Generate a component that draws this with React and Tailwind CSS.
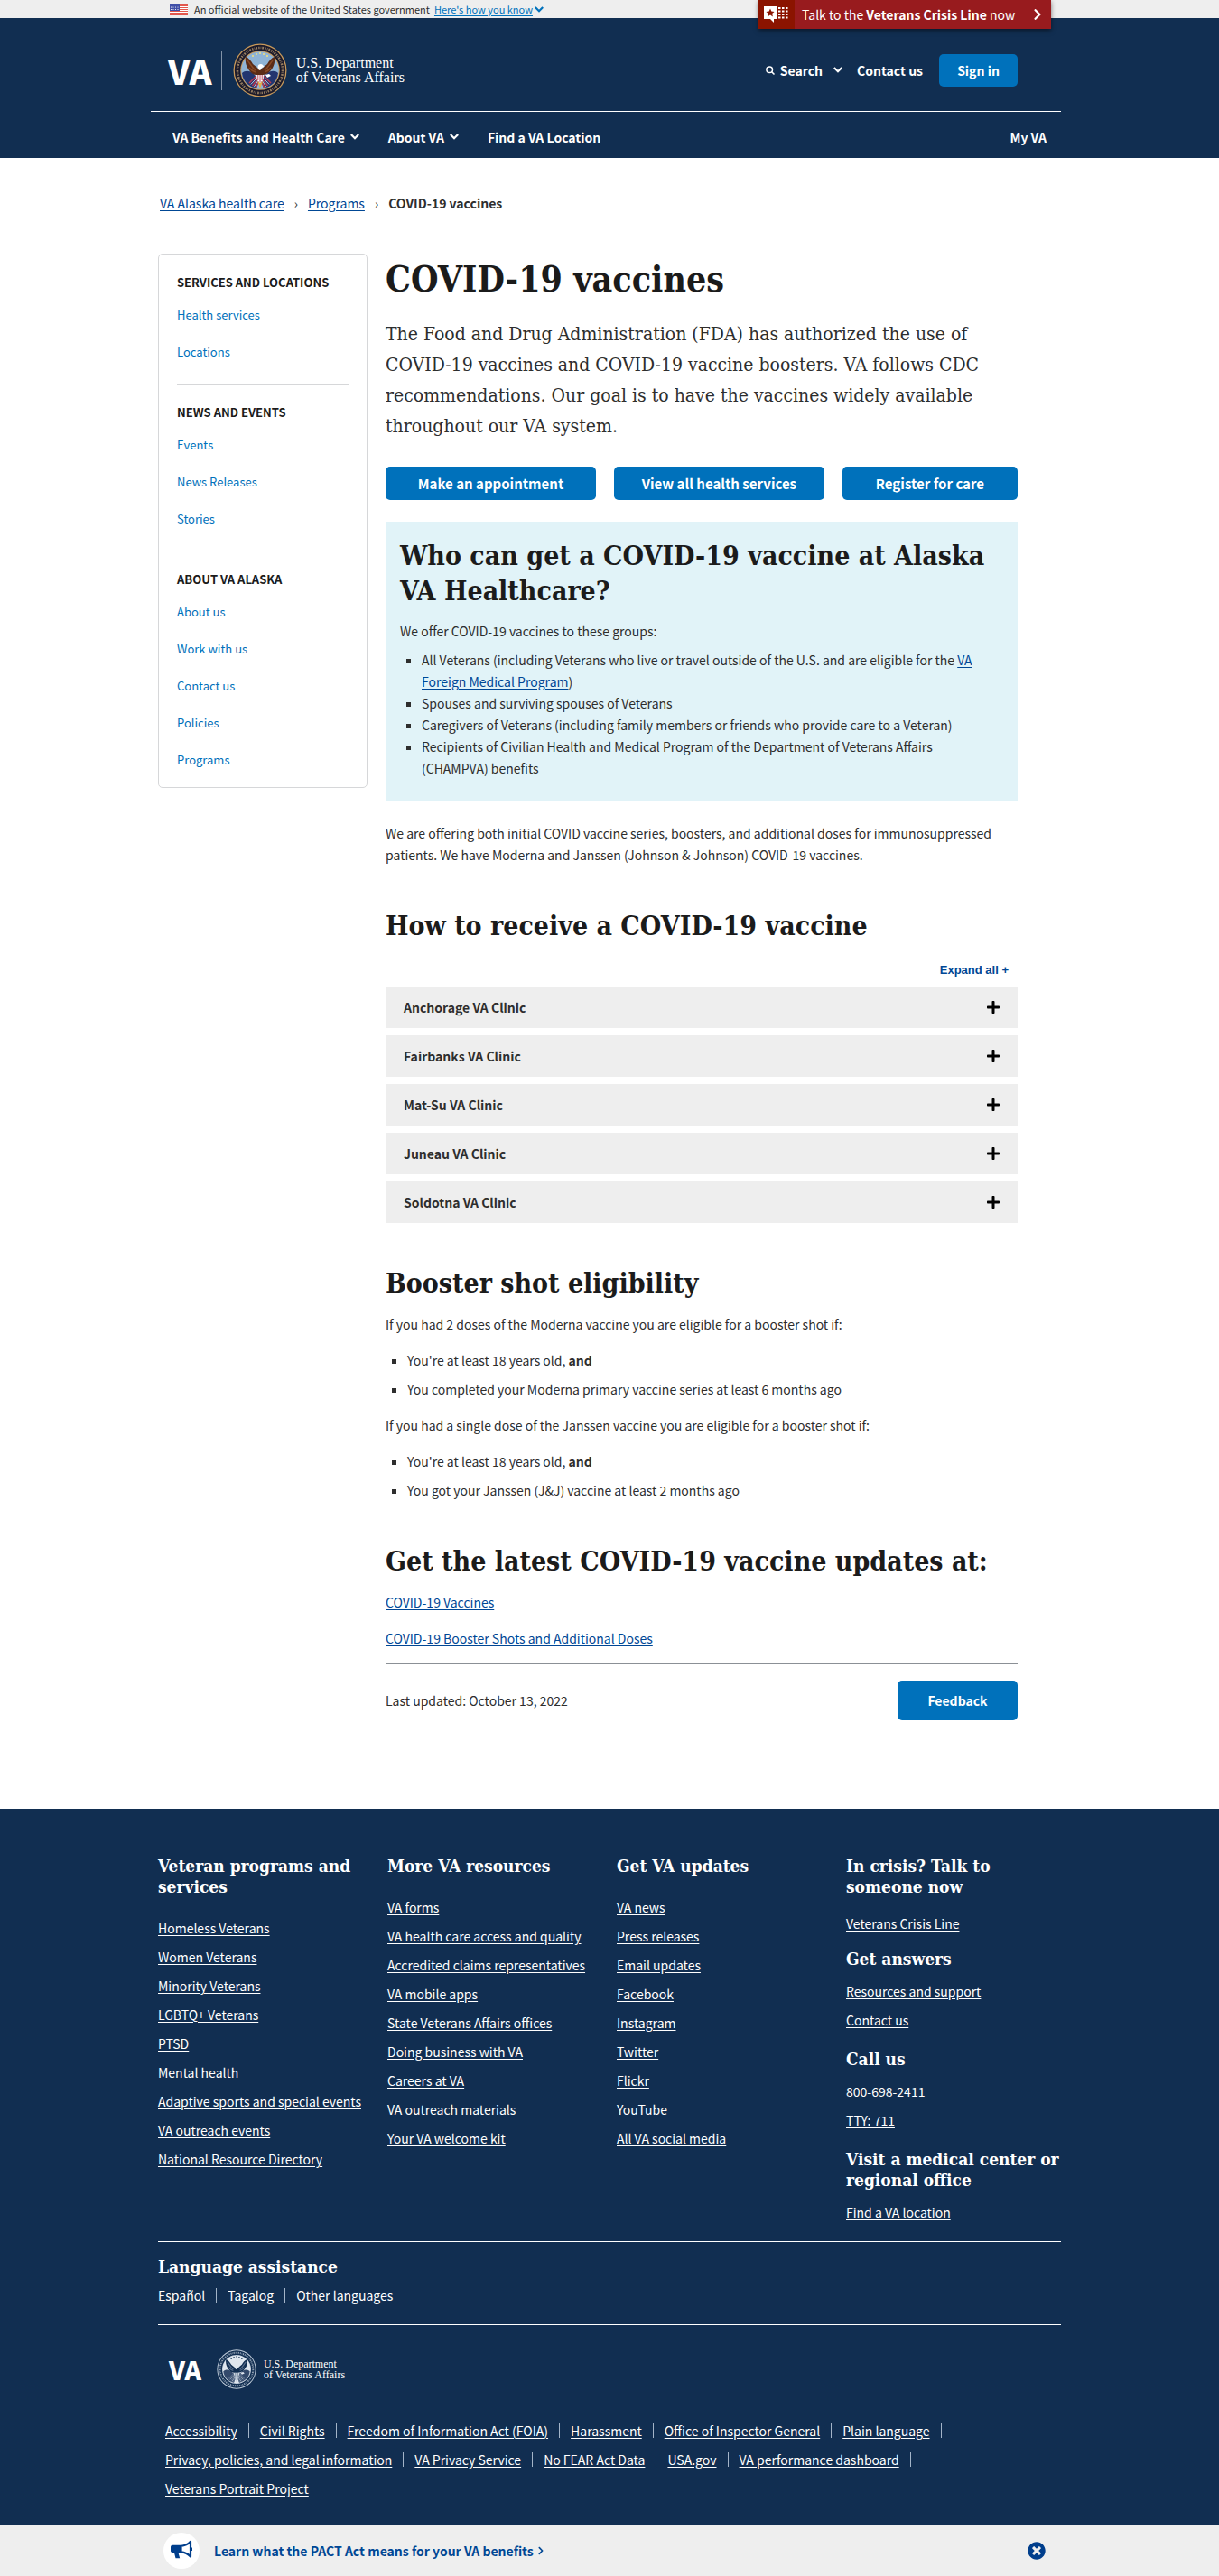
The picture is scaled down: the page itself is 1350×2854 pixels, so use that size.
import React from "react";
import { FaChevronRight, FaPlus, FaTimesCircle } from "react-icons/fa";

const bodyFont = "font-['Noto_Sans_CJK_SC','Noto_Sans',sans-serif]";
const slabFont = "font-['DejaVu_Serif_Condensed','DejaVu_Serif',serif]";

const sideSections = [
  { title: "SERVICES AND LOCATIONS", links: ["Health services", "Locations"] },
  { title: "NEWS AND EVENTS", links: ["Events", "News Releases", "Stories"] },
  { title: "ABOUT VA ALASKA", links: ["About us", "Work with us", "Contact us", "Policies", "Programs"] },
];

const clinics = ["Anchorage", "Fairbanks", "Mat-Su", "Juneau", "Soldotna"];

const footerColumns = [
  {
    title: "Veteran programs and services",
    links: ["Homeless Veterans", "Women Veterans", "Minority Veterans", "LGBTQ+ Veterans", "PTSD", "Mental health", "Adaptive sports and special events", "VA outreach events", "National Resource Directory"],
  },
  {
    title: "More VA resources",
    links: ["VA forms", "VA health care access and quality", "Accredited claims representatives", "VA mobile apps", "State Veterans Affairs offices", "Doing business with VA", "Careers at VA", "VA outreach materials", "Your VA welcome kit"],
  },
  {
    title: "Get VA updates",
    links: ["VA news", "Press releases", "Email updates", "Facebook", "Instagram", "Twitter", "Flickr", "YouTube", "All VA social media"],
  },
];

const contactGroups = [
  { title: "Get answers", links: ["Resources and support", "Contact us"], space: "mt-4" },
  { title: "Call us", links: ["800-698-2411", "TTY: 711"], space: "mt-5" },
  { title: "Visit a medical center or regional office", links: ["Find a VA location"], space: "mt-5" },
];

const legalLinks = ["Accessibility", "Civil Rights", "Freedom of Information Act (FOIA)", "Harassment", "Office of Inspector General", "Plain language", "Privacy, policies, and legal information", "VA Privacy Service", "No FEAR Act Data", "USA.gov", "VA performance dashboard", "Veterans Portrait Project"];

function Flag() {
  return (
    <svg viewBox="0 0 20 13" className="h-[13px] w-5" aria-hidden="true">
      <rect width="20" height="13" fill="#fff" />
      {[0, 2, 4, 6, 8, 10, 12].map((y) => (
        <rect key={y} y={y} width="20" height="1" fill="#e2574c" />
      ))}
      <rect width="11" height="8" fill="#3f4fa8" />
      {[1.5, 4, 6.5].map((y) =>
        [1.5, 4, 6.5, 9].map((x) => <circle key={`${x}-${y}`} cx={x} cy={y} r="0.6" fill="#fff" />)
      )}
    </svg>
  );
}

function Seal({ mono = false, className }) {
  const c = mono
    ? { rope: "#c3cedb", ring: "#112e51", text: "#c3cedb", sky: "#dfe6ee", wing: "#112e51", wing2: "#5a6f8c", star: "#112e51", flag1: "#5a6f8c", flag2: "#33496b", head: "#dfe6ee", gold: "#c3cedb" }
    : { rope: "#c99a5b", ring: "#1b1a2b", text: "#c9a877", sky: "#8fb4d6", wing: "#5b2c17", wing2: "#8a4a25", star: "#f3e27a", flag1: "#b83a50", flag2: "#23356f", head: "#ffffff", gold: "#e0ae4c" };
  return (
    <svg viewBox="0 0 60 60" className={className} aria-hidden="true">
      <circle cx="30" cy="30" r="29.5" fill={c.rope} />
      <circle cx="30" cy="30" r="28.2" fill={c.ring} />
      <circle cx="30" cy="30" r="25" fill="none" stroke={c.text} strokeWidth="2.6" strokeDasharray="1.4 1.1 0.7 1 1.8 1.2" opacity="0.7" />
      <circle cx="30" cy="30" r="21.8" fill={c.rope} />
      <circle cx="30" cy="30" r="20.8" fill={c.sky} />
      {[[22, 14], [26, 12], [30, 11], [34, 12], [38, 14]].map(([x, y]) => (
        <circle key={x} cx={x} cy={y} r="1" fill={c.star} />
      ))}
      <path d="M10 33c3-3 8-3 12 0l7 8-3 9c-9-2-15-8-16-17z" fill={c.flag2} />
      <path d="M50 33c-3-3-8-3-12 0l-7 8 3 9c9-2 15-8 16-17z" fill={c.flag2} />
      <path d="M18 44l8-8M21.500 47l6.500-8M25 49.500l4-8M42 44l-8-8M38.500 47l-6.500-8M35 49.500l-4-8" stroke={c.flag1} strokeWidth="1.500" />
      <path d="M19.800 45.500l7.500-8M23.200 48.300l5-7.500M40.200 45.500l-7.500-8M36.800 48.300l-5-7.500" stroke="#e8ecf2" strokeWidth="0.8" />
      <path d="M14 15c3 1 6 4 8 8l5 4 3 3 3-3 5-4c2-4 5-7 8-8 1 6-1 12-5 16-3 3-6 4-8 4l-3 3-4-3c-3 0-6-2-8-5-3-4-5-9-4-15z" fill={c.wing} />
      <path d="M16 19c3 3 4 7 9 11M18 27c2 3 4 4 7 5M44 19c-3 3-4 7-9 11M42 27c-2 3-4 4-7 5" stroke={c.wing2} strokeWidth="1.400" fill="none" />
      <path d="M27.500 26c0-3 4-4 5.500-2l1.500 2-2.500 1-2 3-2-1z" fill={c.head} />
      <path d="M26 35h8l-1 6-3 3-3-3z" fill={c.head} />
      <path d="M27.800 35v6M30 35v8M32.200 35v6" stroke={c.flag1} strokeWidth="0.900" />
      <path d="M27 42l3 8 3-8-3 2z" fill={c.gold} />
      <path d="M36 35l4-1 2 2-4 2z" fill={c.head} />
    </svg>
  );
}

function Chevron({ className }) {
  return (
    <svg viewBox="0 0 10 7" className={className} fill="none" stroke="currentColor" strokeWidth="2.200" aria-hidden="true">
      <path d="M0.800 1l4.200 4.200L9.200 1" />
    </svg>
  );
}

function CrisisIcon() {
  return (
    <svg viewBox="0 0 28 18" className="h-[18px] w-7" fill="#fff" aria-hidden="true">
      <path d="M0 0h14v14h-3v4l-4-4H0z" />
      <path d="M7 2.500l1.300 3.100 3.300.3-2.500 2.200.8 3.300L7 9.600l-2.900 1.800.8-3.300-2.500-2.200 3.300-.3z" fill="#8b1400" />
      {[1, 4.500, 8, 11.500].map((y) =>
        [16, 20, 24].map((x) => <rect key={`${x}-${y}`} x={x} y={y} width="2.500" height="2" />)
      )}
    </svg>
  );
}

function Megaphone() {
  return (
    <svg viewBox="0 0 24 24" className="h-6 w-6" aria-hidden="true">
      <path d="M0 8c0-1.500 1-2.300 2.500-2.300H11v8.500H8.500l1.700 6H5.500L4 14.200H2.500C1 14.200 0 13.400 0 12z" fill="#003e8c" />
      <path d="M11.500 6.800C16 6.500 19.500 4.500 22 1.800v16.800c-2.500-2.800-6-4.800-10.500-5.200z" fill="#fff" stroke="#003e8c" strokeWidth="2.200" strokeLinejoin="round" />
      <path d="M23 8.500v3.500" stroke="#003e8c" strokeWidth="2" />
    </svg>
  );
}

function FooterLink({ children }) {
  return <a href="#" className="underline underline-offset-2">{children}</a>;
}

function FooterHeading({ children, className = "" }) {
  return <h2 className={`${slabFont} text-[19px] leading-[23px] font-bold ${className}`}>{children}</h2>;
}

function FooterList({ links }) {
  return (
    <ul className="flex flex-col gap-2">
      {links.map((l) => <li key={l}><FooterLink>{l}</FooterLink></li>)}
    </ul>
  );
}

function BarList({ links, className = "" }) {
  return (
    <ul className={`flex flex-wrap gap-y-2 ${className}`}>
      {links.map((l, i) => (
        <li key={l} className="flex items-center">
          <FooterLink>{l}</FooterLink>
          {i < links.length - 1 && <span className="mx-3 h-4 w-px bg-[#a3b4c8]" />}
        </li>
      ))}
    </ul>
  );
}

function H2({ children, className = "" }) {
  return <h2 className={`${slabFont} text-3xl leading-[39px] font-bold text-[#1b1b1b] ${className}`}>{children}</h2>;
}

function BodyLink({ children }) {
  return <a href="#" className="text-[#004795] underline underline-offset-2">{children}</a>;
}

function EligibilityList({ last }) {
  return (
    <ul className="mt-4 flex list-[square] flex-col gap-2 pl-6">
      <li>You're at least 18 years old, <strong>and</strong></li>
      <li>{last}</li>
    </ul>
  );
}

const action = "flex items-center justify-center rounded-[5px] bg-[#0071bb] font-bold text-white";

export default function App() {
  return (
    <div className={`${bodyFont} bg-white text-sm leading-6 text-[#2e2e2e]`}>
      <div className="bg-[#eeeeee]">
        <div className="relative mx-auto max-w-[1000px]">
          <div className="flex h-5 items-center pl-[13px] text-[11px] leading-5">
            <Flag />
            <span className="ml-[7px]">An official website of the United States government</span>
            <button className="ml-[5px] flex items-center gap-0.5 text-[#0071bb]">
              <span className="underline underline-offset-2">Here's how you know</span>
              <Chevron className="h-[7px] w-[10px]" />
            </button>
          </div>
          <a href="#" className="absolute top-0 right-[11px] flex h-8 w-[324px] items-center bg-[#981b1e] leading-8 text-white shadow-[0_2px_5px_rgba(0,0,0,0.5)]">
            <span className="flex h-8 w-10 items-center justify-center bg-[#8b1400]"><CrisisIcon /></span>
            <span className="ml-2">Talk to the <strong>Veterans Crisis Line</strong> now</span>
            <FaChevronRight className="mr-2.5 ml-auto h-[14px] w-[10px]" />
          </a>
        </div>
      </div>

      <header className="bg-[#112e51] font-bold text-white">
        <div className="mx-auto max-w-[1000px]">
          <div className="flex h-[103px] items-center justify-between pt-3 pr-12 pl-[11px]">
            <a href="#" className="flex items-center" aria-label="VA, U.S. Department of Veterans Affairs">
              <span className="text-[38px] leading-10 font-black">VA</span>
              <span className="mr-3 ml-2.5 h-11 w-px bg-[#8293a8]" />
              <Seal className="h-[60px] w-[60px]" />
              <span className="ml-2.5 font-['Liberation_Serif',serif] text-base leading-4 font-normal">
                U.S. Department<br />of Veterans Affairs
              </span>
            </a>
            <div className="flex items-center">
              <button className="flex items-center font-bold">
                <svg viewBox="0 0 10 10" className="mr-1.5 h-2.5 w-2.5" fill="none" stroke="currentColor" strokeWidth="1.500" aria-hidden="true">
                  <circle cx="4.200" cy="4.200" r="3.300" /><path d="M6.600 6.600l2.900 2.900" />
                </svg>
                Search
                <Chevron className="ml-3 h-[7px] w-[10px]" />
              </button>
              <a href="#" className="ml-4">Contact us</a>
              <button className={`${action} ml-[18px] h-9 w-[87px]`}>Sign in</button>
            </div>
          </div>
          <nav className="-ml-2 flex h-[52px] items-center border-t border-white pt-1 pr-4 pl-6">
            <button className="flex items-center gap-1.5 font-bold">VA Benefits and Health Care <Chevron className="h-[7px] w-[10px]" /></button>
            <button className="ml-8 flex items-center gap-1.5 font-bold">About VA <Chevron className="h-[7px] w-[10px]" /></button>
            <a href="#" className="ml-8">Find a VA Location</a>
            <a href="#" className="ml-auto">My VA</a>
          </nav>
        </div>
      </header>

      <div className="mx-auto max-w-[1000px]">
        <nav className="flex items-center gap-[11px] pt-[38px] pb-11 pl-0.5" aria-label="Breadcrumb">
          <BodyLink>VA Alaska health care</BodyLink>
          <span>›</span>
          <BodyLink>Programs</BodyLink>
          <span>›</span>
          <strong>COVID-19 vaccines</strong>
        </nav>

        <div className="grid grid-cols-[232px_minmax(0,700px)] items-start gap-5 pb-[98px]">
          <aside className="rounded-[5px] border border-[#d6d7d9] px-5 pb-[18px] text-[13px]">
            {sideSections.map((s, i) => (
              <section key={s.title} className={i < 2 ? "border-b border-[#d6d7d9] pt-[19px] pb-[23px]" : "pt-[19px]"}>
                <h2 className="font-bold text-[#1b1b1b]">{s.title}</h2>
                <ul className="mt-3 flex flex-col gap-[17px]">
                  {s.links.map((l) => <li key={l}><a href="#" className="text-[#0071bb]">{l}</a></li>)}
                </ul>
              </section>
            ))}
          </aside>

          <main>
            <h1 className={`${slabFont} pt-1 text-[39px] leading-[48px] font-bold text-[#1b1b1b]`}>COVID-19 vaccines</h1>
            <p className={`${slabFont} mt-5 text-[21px] leading-[34px]`}>
              The Food and Drug Administration (FDA) has authorized the use of COVID-19 vaccines and COVID-19 vaccine boosters. VA follows CDC recommendations. Our goal is to have the vaccines widely available throughout our VA system.
            </p>
            <div className="mt-7 grid grid-cols-[6fr_6fr_5fr] gap-5 text-[15px]">
              <a href="#" className={`${action} h-[37px]`}>Make an appointment</a>
              <a href="#" className={`${action} h-[37px]`}>View all health services</a>
              <a href="#" className={`${action} h-[37px]`}>Register for care</a>
            </div>

            <section className="mt-6 bg-[#e1f3f8] px-4 pt-[18px] pb-6">
              <H2>Who can get a COVID-19 vaccine at Alaska VA Healthcare?</H2>
              <p className="mt-[13px]">We offer COVID-19 vaccines to these groups:</p>
              <ul className="mt-2 list-[square] pr-4 pl-6">
                <li>All Veterans (including Veterans who live or travel outside of the U.S. and are eligible for the <BodyLink>VA Foreign Medical Program</BodyLink>)</li>
                <li>Spouses and surviving spouses of Veterans</li>
                <li>Caregivers of Veterans (including family members or friends who provide care to a Veteran)</li>
                <li>Recipients of Civilian Health and Medical Program of the Department of Veterans Affairs (CHAMPVA) benefits</li>
              </ul>
            </section>

            <p className="mt-6">
              We are offering both initial COVID vaccine series, boosters, and additional doses for immunosuppressed patients. We have Moderna and Janssen (Johnson &amp; Johnson) COVID-19 vaccines.
            </p>

            <H2 className="mt-[47px]">How to receive a COVID-19 vaccine</H2>
            <div className="mt-5 flex justify-end pr-2.5">
              <button className="font-['Liberation_Sans',sans-serif] text-[13px] leading-5 font-bold text-[#004795]">Expand all +</button>
            </div>
            <div className="mt-2 flex flex-col gap-2">
              {clinics.map((c) => (
                <button key={c} className="flex h-[46px] items-center justify-between bg-[#eeeeee] pr-[19px] pl-5 font-bold">
                  {c} VA Clinic
                  <FaPlus className="h-4 w-4 text-black" />
                </button>
              ))}
            </div>

            <H2 className="mt-[47px]">Booster shot eligibility</H2>
            <p className="mt-3.5">If you had 2 doses of the Moderna vaccine you are eligible for a booster shot if:</p>
            <EligibilityList last="You completed your Moderna primary vaccine series at least 6 months ago" />
            <p className="mt-4">If you had a single dose of the Janssen vaccine you are eligible for a booster shot if:</p>
            <EligibilityList last="You got your Janssen (J&J) vaccine at least 2 months ago" />

            <H2 className="mt-[47px]">Get the latest COVID-19 vaccine updates at:</H2>
            <p className="mt-3.5"><BodyLink>COVID-19 Vaccines</BodyLink></p>
            <p className="mt-4"><BodyLink>COVID-19 Booster Shots and Additional Doses</BodyLink></p>
            <div className="mt-4 flex items-center justify-between border-t border-[#8b9096] pt-[18px]">
              <p>Last updated: October 13, 2022</p>
              <button className={`${action} h-11 w-[133px]`}>Feedback</button>
            </div>
          </main>
        </div>
      </div>

      <footer className="bg-[#112e51] text-white">
        <div className="mx-auto max-w-[1000px] pt-[52px] pb-7">
          <div className="grid grid-cols-4 gap-4 pb-5">
            {footerColumns.map((c) => (
              <section key={c.title}>
                <FooterHeading className="mb-[22px]">{c.title}</FooterHeading>
                <FooterList links={c.links} />
              </section>
            ))}
            <section>
              <FooterHeading className="mb-[17px]">In crisis? Talk to someone now</FooterHeading>
              <FooterList links={["Veterans Crisis Line"]} />
              {contactGroups.map((g) => (
                <div key={g.title} className={g.space}>
                  <FooterHeading className="mb-3">{g.title}</FooterHeading>
                  <FooterList links={g.links} />
                </div>
              ))}
            </section>
          </div>
          <section className="border-y border-white pt-4 pb-5">
            <FooterHeading className="mb-2">Language assistance</FooterHeading>
            <BarList links={["Español", "Tagalog", "Other languages"]} />
          </section>
          <a href="#" className="mt-[27px] flex w-fit items-center pl-3" aria-label="VA, U.S. Department of Veterans Affairs">
            <span className="text-[28px] leading-[44px] font-black">VA</span>
            <span className="mx-2 h-8 w-px bg-[#5a6f8c]" />
            <Seal mono className="h-11 w-11" />
            <span className="ml-2 font-['Liberation_Serif',serif] text-xs leading-3">
              U.S. Department<br />of Veterans Affairs
            </span>
          </a>
          <BarList links={legalLinks} className="mt-[34px] pr-16 pl-2" />
        </div>
      </footer>

      <div className="bg-[#eeeeee]">
        <div className="mx-auto flex h-[58px] max-w-[1000px] items-center pr-[17px] pl-1.5">
          <span className="flex h-10 w-10 items-center justify-center rounded-full bg-white"><Megaphone /></span>
          <a href="#" className="ml-4 flex items-center gap-1 font-bold text-[#004795]">
            Learn what the PACT Act means for your VA benefits
            <FaChevronRight className="h-2.5 w-2" />
          </a>
          <button className="ml-auto text-[#003e8c]" aria-label="Close"><FaTimesCircle className="h-5 w-5" /></button>
        </div>
      </div>
    </div>
  );
}
